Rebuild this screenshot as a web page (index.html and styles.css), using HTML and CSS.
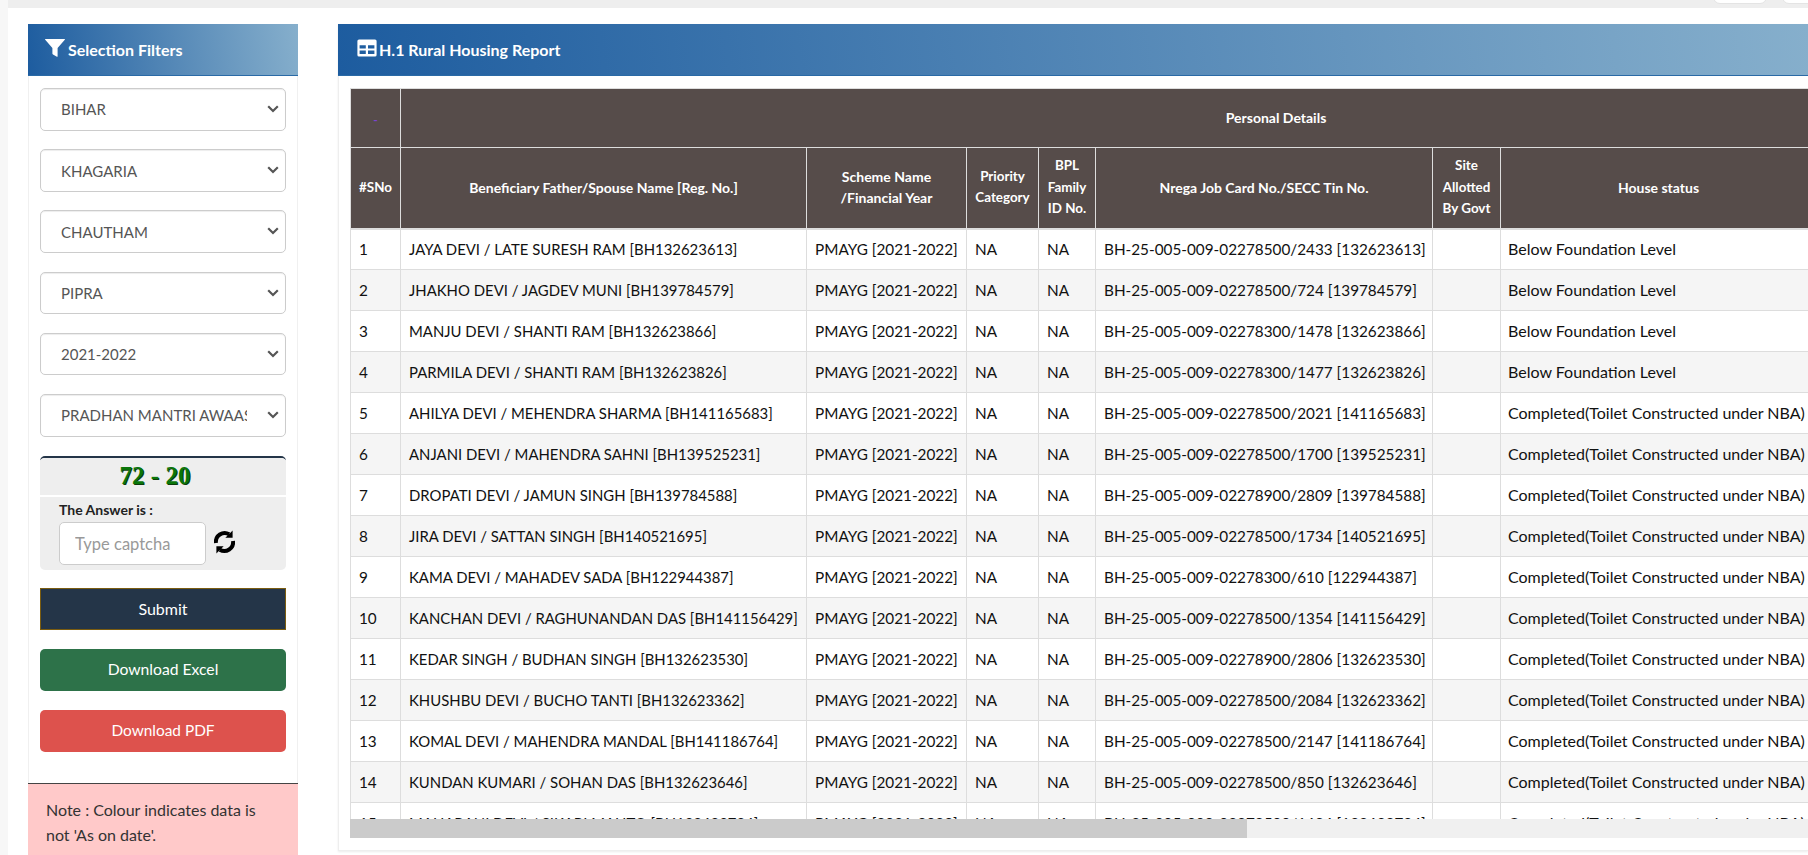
FILE: index.html
```html
<!DOCTYPE html>
<html lang="en">
<head>
<meta charset="utf-8">
<title>H.1 Rural Housing Report</title>
<link rel="stylesheet" href="styles.css">
</head>
<body>
<div class="topstrip"><span class="pill pill-a"></span><span class="pill pill-b"></span></div>
<main class="page">
  <aside class="filters">
    <header class="panel-head">
      <svg class="icon-filter" viewBox="0 0 20 20" width="20" height="20"><path d="M0.5 1h19q.8 0 .3.8L12.600 10v8.200q0 .8-.7.5L8 16.500q-.6-.3-.6-1V10L.2 1.800Q-.3 1 .5 1z" fill="#fff"/></svg>
      <h2>Selection Filters</h2>
    </header>
    <form class="filter-body">
      <div class="select-wrap"><select class="field"><option>BIHAR</option></select><svg class="chevron" viewBox="0 0 12 8" width="12" height="8"><path d="M1.200 1.300 6 6l4.800-4.700" fill="none" stroke="#555" stroke-width="2.200"/></svg></div>
      <div class="select-wrap"><select class="field"><option>KHAGARIA</option></select><svg class="chevron" viewBox="0 0 12 8" width="12" height="8"><path d="M1.200 1.300 6 6l4.800-4.700" fill="none" stroke="#555" stroke-width="2.200"/></svg></div>
      <div class="select-wrap"><select class="field"><option>CHAUTHAM</option></select><svg class="chevron" viewBox="0 0 12 8" width="12" height="8"><path d="M1.200 1.300 6 6l4.800-4.700" fill="none" stroke="#555" stroke-width="2.200"/></svg></div>
      <div class="select-wrap"><select class="field"><option>PIPRA</option></select><svg class="chevron" viewBox="0 0 12 8" width="12" height="8"><path d="M1.200 1.300 6 6l4.800-4.700" fill="none" stroke="#555" stroke-width="2.200"/></svg></div>
      <div class="select-wrap"><select class="field"><option>2021-2022</option></select><svg class="chevron" viewBox="0 0 12 8" width="12" height="8"><path d="M1.200 1.300 6 6l4.800-4.700" fill="none" stroke="#555" stroke-width="2.200"/></svg></div>
      <div class="select-wrap"><select class="field"><option>PRADHAN MANTRI AWAAS YOJANA</option></select><svg class="chevron" viewBox="0 0 12 8" width="12" height="8"><path d="M1.200 1.300 6 6l4.800-4.700" fill="none" stroke="#555" stroke-width="2.200"/></svg></div>
      <div class="captcha">
        <div class="captcha-q">72 - 20</div>
        <div class="captcha-a">
          <label class="captcha-label" for="cap">The Answer is :</label>
          <div class="captcha-row">
            <input id="cap" class="captcha-input" type="text" placeholder="Type captcha">
            <svg class="icon-refresh" viewBox="0 0 22 25" width="23" height="26"><path d="M2.800 13.500A8.500 8.500 0 0 1 15.500 5M19.200 11.500A8.500 8.500 0 0 1 6.500 20" fill="none" stroke="#000" stroke-width="3.800"/><path d="M18.800 1.500v7h-7zM3.200 23.500v-7h7z" fill="#000"/></svg>
          </div>
        </div>
      </div>
      <button class="btn btn-submit" type="button">Submit</button>
      <button class="btn btn-excel" type="button">Download Excel</button>
      <button class="btn btn-pdf" type="button">Download PDF</button>
    </form>
    <p class="note">Note : Colour indicates data is not 'As on date'.</p>
  </aside>
  <section class="report">
    <header class="panel-head">
      <svg class="icon-table" viewBox="0 0 20 18" width="20" height="18"><path fill-rule="evenodd" d="M2 0.5h16a1.600 1.600 0 0 1 1.600 1.600v13.800a1.600 1.600 0 0 1-1.600 1.600H2a1.600 1.600 0 0 1-1.600-1.600V2.100A1.600 1.600 0 0 1 2 .5zM2.600 6.200v3.300h6.200V6.200zM11 6.200v3.300h6.400V6.200zM2.600 11.600v3.300h6.200v-3.300zM11 11.600v3.300h6.400v-3.300z" fill="#fff"/></svg>
      <h2>H.1 Rural Housing Report</h2>
    </header>
    <div class="table-wrap">
      <table class="grid">
        <colgroup>
          <col class="c-sno"><col class="c-name"><col class="c-scheme"><col class="c-prio"><col class="c-bpl"><col class="c-job"><col class="c-site"><col class="c-status"><col class="c-more"><col class="c-rest">
        </colgroup>
        <thead>
          <tr class="group-row">
            <th><span class="dash">-</span></th>
            <th colspan="8">Personal Details</th>
            <th></th>
          </tr>
          <tr class="label-row">
            <th>#SNo</th>
            <th>Beneficiary Father/Spouse Name [Reg. No.]</th>
            <th>Scheme Name<br>/Financial Year</th>
            <th>Priority<br>Category</th>
            <th>BPL<br>Family<br>ID No.</th>
            <th>Nrega Job Card No./SECC Tin No.</th>
            <th>Site<br>Allotted<br>By Govt</th>
            <th>House status</th>
            <th></th>
            <th></th>
          </tr>
        </thead>
        <tbody>
          <tr><td>1</td><td>JAYA DEVI / LATE SURESH RAM [BH132623613]</td><td>PMAYG [2021-2022]</td><td>NA</td><td>NA</td><td>BH-25-005-009-02278500/2433 [132623613]</td><td></td><td>Below Foundation Level</td><td></td><td></td></tr>
          <tr><td>2</td><td>JHAKHO DEVI / JAGDEV MUNI [BH139784579]</td><td>PMAYG [2021-2022]</td><td>NA</td><td>NA</td><td>BH-25-005-009-02278500/724 [139784579]</td><td></td><td>Below Foundation Level</td><td></td><td></td></tr>
          <tr><td>3</td><td>MANJU DEVI / SHANTI RAM [BH132623866]</td><td>PMAYG [2021-2022]</td><td>NA</td><td>NA</td><td>BH-25-005-009-02278300/1478 [132623866]</td><td></td><td>Below Foundation Level</td><td></td><td></td></tr>
          <tr><td>4</td><td>PARMILA DEVI / SHANTI RAM [BH132623826]</td><td>PMAYG [2021-2022]</td><td>NA</td><td>NA</td><td>BH-25-005-009-02278300/1477 [132623826]</td><td></td><td>Below Foundation Level</td><td></td><td></td></tr>
          <tr><td>5</td><td>AHILYA DEVI / MEHENDRA SHARMA [BH141165683]</td><td>PMAYG [2021-2022]</td><td>NA</td><td>NA</td><td>BH-25-005-009-02278500/2021 [141165683]</td><td></td><td>Completed(Toilet Constructed under NBA)</td><td></td><td></td></tr>
          <tr><td>6</td><td>ANJANI DEVI / MAHENDRA SAHNI [BH139525231]</td><td>PMAYG [2021-2022]</td><td>NA</td><td>NA</td><td>BH-25-005-009-02278500/1700 [139525231]</td><td></td><td>Completed(Toilet Constructed under NBA)</td><td></td><td></td></tr>
          <tr><td>7</td><td>DROPATI DEVI / JAMUN SINGH [BH139784588]</td><td>PMAYG [2021-2022]</td><td>NA</td><td>NA</td><td>BH-25-005-009-02278900/2809 [139784588]</td><td></td><td>Completed(Toilet Constructed under NBA)</td><td></td><td></td></tr>
          <tr><td>8</td><td>JIRA DEVI / SATTAN SINGH [BH140521695]</td><td>PMAYG [2021-2022]</td><td>NA</td><td>NA</td><td>BH-25-005-009-02278500/1734 [140521695]</td><td></td><td>Completed(Toilet Constructed under NBA)</td><td></td><td></td></tr>
          <tr><td>9</td><td>KAMA DEVI / MAHADEV SADA [BH122944387]</td><td>PMAYG [2021-2022]</td><td>NA</td><td>NA</td><td>BH-25-005-009-02278300/610 [122944387]</td><td></td><td>Completed(Toilet Constructed under NBA)</td><td></td><td></td></tr>
          <tr><td>10</td><td>KANCHAN DEVI / RAGHUNANDAN DAS [BH141156429]</td><td>PMAYG [2021-2022]</td><td>NA</td><td>NA</td><td>BH-25-005-009-02278500/1354 [141156429]</td><td></td><td>Completed(Toilet Constructed under NBA)</td><td></td><td></td></tr>
          <tr><td>11</td><td>KEDAR SINGH / BUDHAN SINGH [BH132623530]</td><td>PMAYG [2021-2022]</td><td>NA</td><td>NA</td><td>BH-25-005-009-02278900/2806 [132623530]</td><td></td><td>Completed(Toilet Constructed under NBA)</td><td></td><td></td></tr>
          <tr><td>12</td><td>KHUSHBU DEVI / BUCHO TANTI [BH132623362]</td><td>PMAYG [2021-2022]</td><td>NA</td><td>NA</td><td>BH-25-005-009-02278500/2084 [132623362]</td><td></td><td>Completed(Toilet Constructed under NBA)</td><td></td><td></td></tr>
          <tr><td>13</td><td>KOMAL DEVI / MAHENDRA MANDAL [BH141186764]</td><td>PMAYG [2021-2022]</td><td>NA</td><td>NA</td><td>BH-25-005-009-02278500/2147 [141186764]</td><td></td><td>Completed(Toilet Constructed under NBA)</td><td></td><td></td></tr>
          <tr><td>14</td><td>KUNDAN KUMARI / SOHAN DAS [BH132623646]</td><td>PMAYG [2021-2022]</td><td>NA</td><td>NA</td><td>BH-25-005-009-02278500/850 [132623646]</td><td></td><td>Completed(Toilet Constructed under NBA)</td><td></td><td></td></tr>
          <tr><td>15</td><td>MAHARANI DEVI / SIKARI MAHTO [BH132623724]</td><td>PMAYG [2021-2022]</td><td>NA</td><td>NA</td><td>BH-25-005-009-02278500/1684 [132623724]</td><td></td><td>Completed(Toilet Constructed under NBA)</td><td></td><td></td></tr>
        </tbody>
      </table>
    </div>
    <div class="hscroll"><div class="hscroll-thumb"></div></div>
  </section>
</main>
</body>
</html>
```
FILE: styles.css
```css
* { box-sizing: border-box; }
html, body { height: 100%; }
body {
  margin: 0;
  height: 855px;
  overflow: hidden;
  background: #f7f7f7;
  font-family: Lato, "Liberation Sans", sans-serif;
  font-size: 15px;
  color: #333;
  position: relative;
}
.topstrip { height: 8px; margin-left: 8px; background: #eee; }
.pill {
  position: absolute;
  top: -10px;
  height: 14px;
  width: 54px;
  background: #fff;
  border-radius: 8px;
  border: 1px solid #e4e4e4;
}
.pill-a { left: 1713px; }
.pill-b { left: 1782px; }
.page {
  display: flex;
  align-items: flex-start;
  gap: 40px;
  height: 847px;
  margin-left: 8px;
  padding: 16px 0 0 20px;
  background: #fff;
  overflow: hidden;
}
.filters {
  flex: 0 0 270px;
  width: 270px;
  min-width: 0;
  height: 860px;
  border: 1px solid #f0f0f0;
  border-top: 0;
  border-bottom: 0;
  background: #fff;
  display: flex;
  flex-direction: column;
}
.panel-head {
  display: flex;
  align-items: center;
  height: 52px;
  background: linear-gradient(82deg, #1d5c9f 0%, #86afcc 100%);
  border-bottom: 1px solid #2a6aa6;
  color: #fff;
}
.filters .panel-head { padding-left: 17px; gap: 3px; margin: 0 -1px; }
.report .panel-head { padding-left: 19px; gap: 2px; margin-left: -1px; }
.panel-head h2 {
  margin: -1px 0 0;
  font-size: 16px;
  font-weight: 700;
  color: #fff;
}
.icon-filter { flex: none; margin-top: -3px; }
.icon-table { flex: none; margin-top: -3px; }
.filter-body {
  display: flex;
  flex-direction: column;
  padding: 12px 11px 0;
}
.select-wrap {
  position: relative;
  height: 42.67px;
  margin-bottom: 18.53px;
}
.field {
  display: block;
  width: 100%;
  height: 100%;
  padding: 0 38px 0 20px;
  border: 1px solid #ccc;
  border-radius: 5px;
  background-color: #fff;
  font-family: inherit;
  font-size: 15px;
  color: #555;
  box-shadow: inset 0 1px 1px rgba(0,0,0,.075);
  appearance: none;
  -webkit-appearance: none;
}
.chevron {
  position: absolute;
  top: 17px;
  right: 7px;
  pointer-events: none;
}
.captcha {
  height: 114px;
  margin-top: 1px;
  border-top: 2px solid #243548;
  border-radius: 5px;
  overflow: hidden;
  display: flex;
  flex-direction: column;
  gap: 2px;
}
.captcha-q {
  height: 37px;
  padding-right: 16px;
  background: #eee;
  text-align: center;
  font-family: "Liberation Serif", serif;
  font-weight: 700;
  font-size: 25px;
  line-height: 36px;
  color: #0a760a;
  text-shadow: 1px 1px 0 #0b3d0b;
}
.captcha-a {
  flex: 1;
  background: #eee;
  padding: 4px 0 0 19px;
}
.captcha-label {
  display: block;
  font-size: 14px;
  font-weight: 700;
  line-height: 18px;
  color: #222;
}
.captcha-row {
  display: flex;
  align-items: center;
  gap: 7px;
  margin-top: 3px;
}
.captcha-input {
  width: 147px;
  height: 43px;
  padding: 0 15px;
  border: 1px solid #ccc;
  border-radius: 5px;
  background: #fff;
  font-family: inherit;
  font-size: 16.5px;
  color: #555;
}
.captcha-input::placeholder { color: #999; opacity: 1; }
.icon-refresh { flex: none; margin-top: -4px; }
.btn {
  display: block;
  width: 100%;
  height: 42px;
  margin: 0;
  padding: 0 0 2px;
  border: 0;
  border-radius: 5px;
  font-family: inherit;
  font-size: 15.7px;
  color: #fff;
}
.btn-submit {
  margin-top: 18px;
  background: #243548;
  border: 1px solid #7a5c10;
  border-radius: 0;
  font-size: 16px;
}
.btn-excel { margin-top: 19px; background: #2d7249; }
.btn-pdf { margin-top: 19px; background: #dd524d; font-size: 15.4px; }
.note {
  margin: 31px -1px 0;
  padding: 13px 30px 0 18px;
  flex: 1;
  border-top: 1px solid #444;
  background: #ffc9c9;
  font-size: 16px;
  line-height: 25px;
  color: #333;
}
.report {
  flex: 1;
  min-width: 0;
  height: 827px;
  border-left: 1px solid #eee;
  border-bottom: 1px solid #eee;
  background: #fff;
  box-shadow: 0 1px 2px rgba(0,0,0,.08);
}
.table-wrap {
  margin: 12px 0 0 11px;
  height: 731px;
  overflow: hidden;
}
.hscroll {
  height: 19px;
  margin-left: 11px;
  background: #f0f0f0;
}
.hscroll-thumb {
  width: 897px;
  height: 100%;
  background: #cbcbcb;
}
.grid {
  width: 2370px;
  table-layout: fixed;
  border-collapse: collapse;
}
.c-sno { width: 50px; }
.c-name { width: 406px; }
.c-scheme { width: 160px; }
.c-prio { width: 72px; }
.c-bpl { width: 57px; }
.c-job { width: 337px; }
.c-site { width: 68px; }
.c-status { width: 316px; }
.c-more { width: 335px; }
.c-rest { width: 569px; }
.grid th {
  padding: 0 3px 1px;
  background: #564c4a;
  border: 1px solid #ddd;
  color: #fff;
  font-size: 14px;
  font-weight: 700;
  line-height: 21.4px;
  text-align: center;
  vertical-align: middle;
}
.group-row th { height: 59px; }
.label-row th { height: 81px; }
.label-row th:nth-child(1),
.label-row th:nth-child(4),
.label-row th:nth-child(5),
.label-row th:nth-child(7) { font-size: 13.4px; }
.label-row { border-bottom: 2px solid #ddd; }
.dash { display: block; margin-top: 5px; color: #7a44d0; font-size: 12px; }
.grid td {
  height: 41px;
  padding: 0 7px 0 8px;
  border: 1px solid #ddd;
  font-size: 15.3px;
  color: #111;
  white-space: nowrap;
  vertical-align: middle;
}
.grid td:nth-child(2) { font-size: 14.9px; }
.grid td:nth-child(8) { font-size: 16px; padding-left: 7px; padding-bottom: 2px; }
.grid tbody tr:nth-child(even) td { background: #f5f5f5; }
```
